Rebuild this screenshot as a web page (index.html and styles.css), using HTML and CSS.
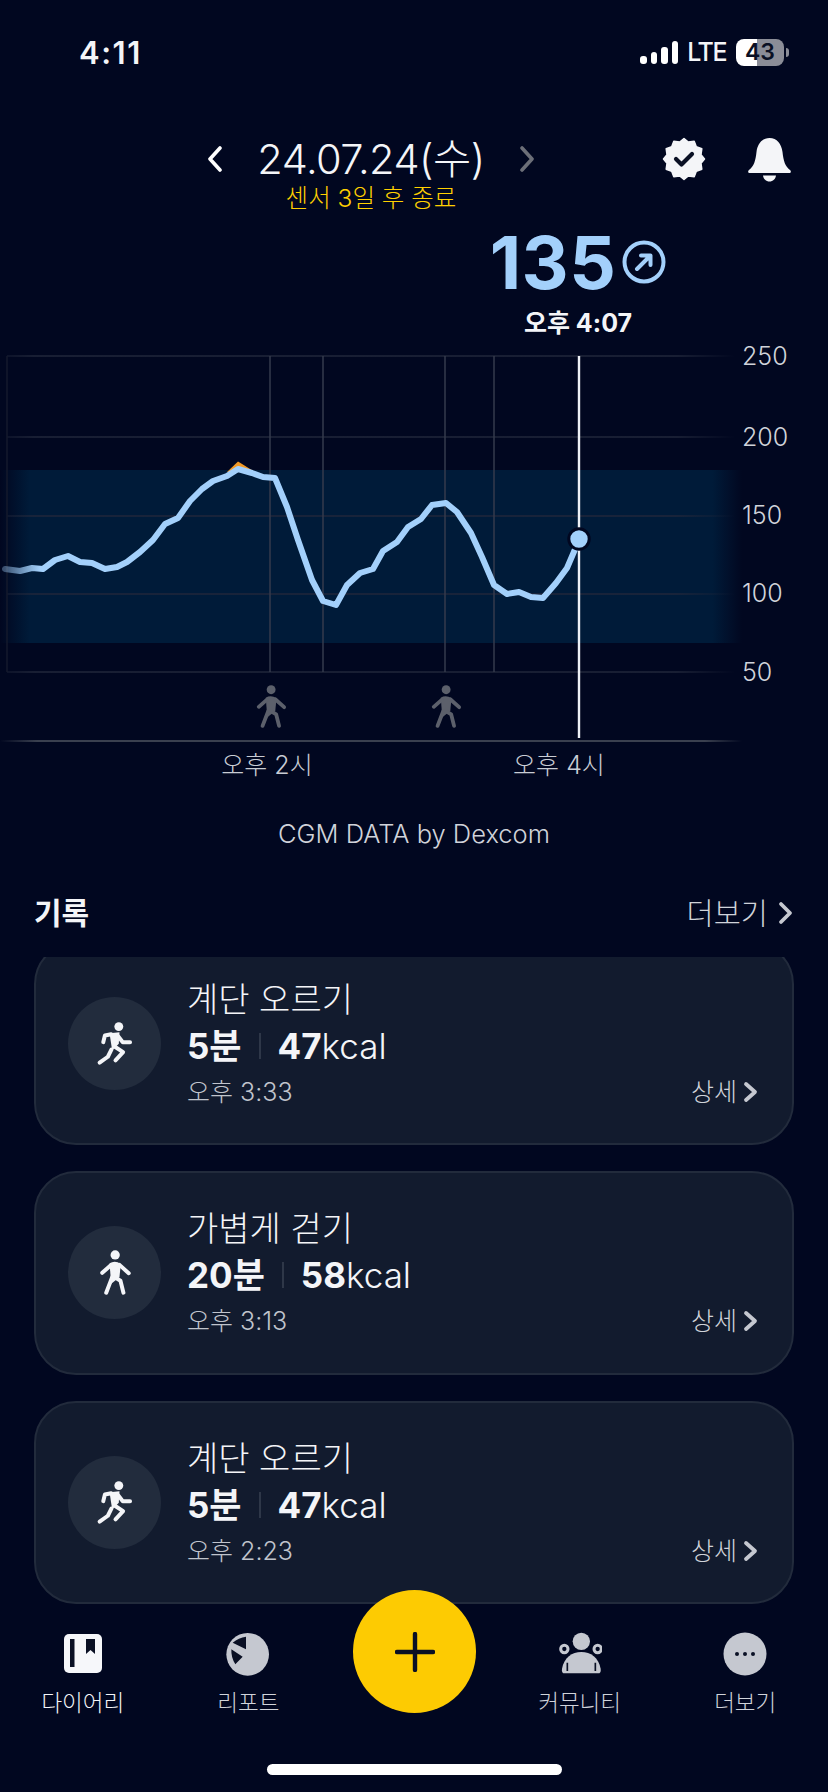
FILE: index.html
```html
<!DOCTYPE html>
<html lang="ko">
	<head>
		<meta charset="utf-8">
		<title>기록</title>
		<link rel="stylesheet" href="styles.css">
	</head>
	<body>
		<div id="screen">
			<!-- status bar -->
			<div class="status">
				<span class="clock">4:11</span>
				<div class="signal"><i></i><i></i><i></i><i></i></div>
				<span class="lte">LTE</span>
				<div class="battery">43</div>
				<div class="batteryTip"></div>
			</div>

			<!-- date header -->
			<div class="dateBar">
				<svg class="chev" width="15" height="26" viewBox="0 0 15 26"><path d="M13 2 L3 13 L13 24" fill="none" stroke="#fff" stroke-width="3.6" stroke-linecap="round" stroke-linejoin="round"/></svg>
				<div class="dateBlock">
					<div class="date">24.07.24(수)</div>
					<div class="sensor">센서 3일 후 종료</div>
				</div>
				<svg class="chev" width="15" height="26" viewBox="0 0 15 26"><path d="M2 2 L12 13 L2 24" fill="none" stroke="#6c6f78" stroke-width="3.6" stroke-linecap="round" stroke-linejoin="round"/></svg>
				<svg class="badge" width="44" height="44" viewBox="-22 -22 44 44">
					<polygon fill="#f4f5f8" stroke="#f4f5f8" stroke-width="1.5" stroke-linejoin="round" points="0,-20.500 4.300,-17 10.200,-17.800 12.300,-12.300 17.800,-10.200 17,-4.300 20.500,0 17,4.300 17.800,10.200 12.300,12.300 10.200,17.800 4.300,17 0,20.500 -4.300,17 -10.200,17.800 -12.300,12.300 -17.800,10.200 -17,4.300 -20.500,0 -17,-4.300 -17.800,-10.200 -12.300,-12.300 -10.200,-17.800 -4.300,-17"/>
					<path d="M-8 0 L-2.500 5.500 L8 -5" fill="none" stroke="#0a1024" stroke-width="4.200" stroke-linecap="round" stroke-linejoin="round"/>
				</svg>
				<svg class="bell" width="43" height="44" viewBox="0 0 43 44">
					<path fill="#f4f5f8" d="M21.500 0 C29 0 33.500 6 34.500 14 C35.500 23 37 28 42 32 C43.500 33.500 43 35 41 35 L2 35 C0 35 -0.500 33.500 1 32 C6 28 7.500 23 8.500 14 C9.500 6 14 0 21.500 0 Z M15 37.500 L28 37.500 C27.500 41 25 43.500 21.500 43.500 C18 43.500 15.500 41 15 37.500 Z"/>
				</svg>
			</div>

			<!-- current reading -->
			<div class="reading">
				<div class="valueRow">
					<span class="value">135</span>
					<svg width="44" height="44" viewBox="0 0 44 44">
						<circle cx="22" cy="22" r="19.500" fill="none" stroke="#a3d0fb" stroke-width="4"/>
						<path d="M15 29 L28 16 M19 15.500 L28.500 15.500 L28.500 25" fill="none" stroke="#a3d0fb" stroke-width="4" stroke-linecap="round" stroke-linejoin="round"/>
					</svg>
				</div>
				<div class="readingTime">오후 4:07</div>
			</div>

			<!-- chart: viewBox keeps the page coordinates -->
			<svg class="chart" width="828" height="460" viewBox="0 340 828 460">
				<defs>
					<linearGradient id="band" x1="0" x2="1" y1="0" y2="0">
						<stop offset="0" stop-color="#001b39" stop-opacity="0"/>
						<stop offset="0.04" stop-color="#001b39"/>
						<stop offset="0.96" stop-color="#001b39"/>
						<stop offset="1" stop-color="#001b39" stop-opacity="0"/>
					</linearGradient>
					<linearGradient id="base" x1="0" x2="1" y1="0" y2="0">
						<stop offset="0" stop-color="#3a404f" stop-opacity="0"/>
						<stop offset="0.05" stop-color="#3a404f"/>
						<stop offset="0.95" stop-color="#3a404f"/>
						<stop offset="1" stop-color="#3a404f" stop-opacity="0"/>
					</linearGradient>
					<linearGradient id="gridFade" gradientUnits="userSpaceOnUse" x1="5" x2="735" y1="0" y2="0">
						<stop offset="0" stop-color="#20263a" stop-opacity="0.5"/>
						<stop offset="0.04" stop-color="#20263a"/>
						<stop offset="0.92" stop-color="#20263a"/>
						<stop offset="1" stop-color="#20263a" stop-opacity="0"/>
					</linearGradient>
					<linearGradient id="curve" gradientUnits="userSpaceOnUse" x1="4" x2="40" y1="0" y2="0">
						<stop offset="0" stop-color="#a3d0fb" stop-opacity="0.35"/>
						<stop offset="1" stop-color="#a3d0fb"/>
					</linearGradient>
					<symbol id="walk" viewBox="110 120 110 145">
						<circle cx="167" cy="138" r="14"/>
						<path d="M150 163 Q167 153 184 165 L180 205 L155 225 Z"/>
						<path class="limb" d="M153 170 L128 192 M180 168 L208 193 M158 205 L140 252 M165 205 L183 216 L192 252"/>
					</symbol>
					<symbol id="run" viewBox="110 120 110 145">
						<circle cx="178" cy="143" r="13.500"/>
						<path d="M150 163 L180 160 L178 195 L158 215 Z"/>
						<path class="limb" d="M155 166 L136 170 L131 190 M176 172 L190 190 L212 190 M156 212 L145 234 L120 252 M165 203 L191 220 L168 245"/>
					</symbol>
				</defs>
				<rect x="0" y="470" width="742" height="173" fill="url(#band)"/>
				<g class="grid" stroke="url(#gridFade)">
					<line x1="7" x2="735" y1="356" y2="356"/>
					<line x1="7" x2="735" y1="437" y2="437"/>
					<line x1="7" x2="735" y1="516" y2="516"/>
					<line x1="7" x2="735" y1="594" y2="594"/>
					<line x1="7" x2="735" y1="672" y2="672"/>
				</g>
				<line class="leftEdge" x1="7" x2="7" y1="356" y2="672"/>
				<g class="vgrid">
					<line x1="270" x2="270" y1="356" y2="672"/>
					<line x1="323" x2="323" y1="356" y2="672"/>
					<line x1="445" x2="445" y1="356" y2="672"/>
					<line x1="494" x2="494" y1="356" y2="672"/>
				</g>
				<rect x="0" y="740" width="742" height="2" fill="url(#base)"/>
				<line x1="579" x2="579" y1="356" y2="738" stroke="#eef1f6" stroke-width="2.400"/>
				<polygon points="227,472 238,461.500 255,472" fill="#f39a25"/>
				<polyline class="curve" stroke="url(#curve)" points="5,569 20,571 32,568 43,569 55,560 68,556 80,562 92,563 105,569 117,567 127,562 140,552 153,540 165,524 178,518 190,501 202,489 213,481 227,476 238,469 252,473 263,477 275,478 287,507 298,540 312,580 323,601 336,605 347,585 360,573 373,569 383,551 397,542 408,527 421,519 432,505 446,503 457,512 471,533 482,557 494,585 507,594 519,592 531,597 543,598 556,583 567,568 579,540"/>
				<circle cx="579" cy="539" r="10.200" fill="#a3d0fb" stroke="#010720" stroke-width="3"/>
				<svg x="253" y="684" width="35" height="46" class="walker" viewBox="0 0 110 145"><use href="#walk"/></svg>
				<svg x="428" y="684" width="35" height="46" class="walker" viewBox="0 0 110 145"><use href="#walk"/></svg>
				<g class="axis">
					<text x="742" y="365">250</text>
					<text x="742" y="446">200</text>
					<text x="742" y="524">150</text>
					<text x="742" y="602">100</text>
					<text x="742" y="681">50</text>
				</g>
				<text class="hour" x="267" y="774">오후 2시</text>
				<text class="hour" x="559" y="774">오후 4시</text>
			</svg>

			<div class="source">CGM DATA by Dexcom</div>

			<div class="sectionHead">
				<span class="sectionTitle">기록</span>
				<span class="more">더보기
					<svg width="15" height="24" viewBox="0 0 15 24"><path d="M3 3 L12 12 L3 21" fill="none" stroke="#c5c8d0" stroke-width="3.800" stroke-linecap="round" stroke-linejoin="round"/></svg>
				</span>
			</div>

			<!-- records, the first card is scrolled under the header -->
			<div class="records">
				<div class="card">
					<div class="cardIcon"><svg width="37" height="48" viewBox="0 0 110 145"><use href="#run"/></svg></div>
					<div class="cardBody">
						<div class="cardTitle">계단 오르기</div>
						<div class="cardStats"><b>5분</b><i></i><span><b>47</b>kcal</span></div>
						<div class="cardFoot">
							<span>오후 3:33</span>
							<span class="detail">상세<svg width="15" height="22" viewBox="0 0 15 22"><path d="M3 3 L12 11 L3 19" fill="none" stroke="#c5c8d0" stroke-width="3.800" stroke-linecap="round" stroke-linejoin="round"/></svg></span>
						</div>
					</div>
				</div>
				<div class="card">
					<div class="cardIcon"><svg width="37" height="48" viewBox="0 0 110 145"><use href="#walk"/></svg></div>
					<div class="cardBody">
						<div class="cardTitle">가볍게 걷기</div>
						<div class="cardStats"><b>20분</b><i></i><span><b>58</b>kcal</span></div>
						<div class="cardFoot">
							<span>오후 3:13</span>
							<span class="detail">상세<svg width="15" height="22" viewBox="0 0 15 22"><path d="M3 3 L12 11 L3 19" fill="none" stroke="#c5c8d0" stroke-width="3.800" stroke-linecap="round" stroke-linejoin="round"/></svg></span>
						</div>
					</div>
				</div>
				<div class="card">
					<div class="cardIcon"><svg width="37" height="48" viewBox="0 0 110 145"><use href="#run"/></svg></div>
					<div class="cardBody">
						<div class="cardTitle">계단 오르기</div>
						<div class="cardStats"><b>5분</b><i></i><span><b>47</b>kcal</span></div>
						<div class="cardFoot">
							<span>오후 2:23</span>
							<span class="detail">상세<svg width="15" height="22" viewBox="0 0 15 22"><path d="M3 3 L12 11 L3 19" fill="none" stroke="#c5c8d0" stroke-width="3.800" stroke-linecap="round" stroke-linejoin="round"/></svg></span>
						</div>
					</div>
				</div>
			</div>

			<!-- tab bar -->
			<div class="tabs">
				<div class="tab tabOn">
					<svg width="44" height="44" viewBox="0 0 44 44">
						<rect x="3" y="2" width="38" height="39" rx="5" fill="#f6f7fa"/>
						<rect x="9" y="7" width="4.500" height="28" fill="#0a1024"/>
						<path d="M25 7 H34 V22 L29.500 18 L25 22 Z" fill="#0a1024"/>
					</svg>
					<span>다이어리</span>
				</div>
				<div class="tab">
					<svg width="44" height="44" viewBox="590 98 132 132">
						<circle cx="655" cy="165" r="64" fill="#c5c8d0"/>
						<path d="M610 130 Q628 115 650 112 L650 150 Z M606 150 L640 172 L618 195 Q605 175 606 150 Z" fill="#0a1024"/>
					</svg>
					<span>리포트</span>
				</div>
				<div class="tab">
					<div class="addBtn">
						<svg width="40" height="40" viewBox="0 0 40 40"><path d="M20 2 V38 M2 20 H38" stroke="#0a1024" stroke-width="4.400" stroke-linecap="round"/></svg>
					</div>
				</div>
				<div class="tab">
					<svg width="44" height="44" viewBox="108 98 132 132">
						<circle cx="178" cy="126" r="26" fill="#c5c8d0"/>
						<circle cx="127" cy="149" r="11" fill="none" stroke="#c5c8d0" stroke-width="9"/>
						<circle cx="227" cy="149" r="11" fill="none" stroke="#c5c8d0" stroke-width="9"/>
						<path d="M128 222 Q118 222 120 208 C126 175 150 158 178 158 C206 158 230 175 236 208 Q238 222 228 222 Z" fill="#c5c8d0"/>
						<path d="M136 215 L136 190 M220 215 L220 190" stroke="#0a1024" stroke-width="5"/>
					</svg>
					<span>커뮤니티</span>
				</div>
				<div class="tab">
					<svg width="44" height="44" viewBox="0 0 44 44">
						<circle cx="22" cy="22" r="21.500" fill="#c5c8d0"/>
						<circle cx="14" cy="22" r="2" fill="#0a1024"/>
						<circle cx="22" cy="22" r="2" fill="#0a1024"/>
						<circle cx="30" cy="22" r="2" fill="#0a1024"/>
					</svg>
					<span>더보기</span>
				</div>
			</div>
			<div class="homeBar"></div>
		</div>
	</body>
</html>
```

FILE: styles.css
```css
html, body {
	margin: 0;
	padding: 0;
	background-color: #010720;
}
body {
	font-family: Inter, "Noto Sans CJK KR", sans-serif;
	color: #f4f5f8;
}
#screen {
	width: 828px;
	height: 1792px;
	overflow: hidden;
}

/* status bar */
.status {
	height: 104px;
	display: flex;
	align-items: center;
	padding-left: 79px;
	box-sizing: border-box;
}
.clock {
	font-size: 31px;
	font-weight: 600;
	letter-spacing: 1.500px;
	margin-right: auto;
}
.signal {
	display: flex;
	align-items: flex-end;
	gap: 4px;
	height: 23px;
	margin-right: 9px;
}
.signal i {
	width: 6.500px;
	border-radius: 3px;
	background-color: #fff;
}
.signal i:nth-child(1) { height: 8px; }
.signal i:nth-child(2) { height: 12px; }
.signal i:nth-child(3) { height: 17px; }
.signal i:nth-child(4) { height: 23px; }
.lte {
	font-size: 25px;
	font-weight: 500;
	letter-spacing: -1.500px;
	margin-right: 10px;
}
.battery {
	width: 48px;
	height: 27px;
	border-radius: 8px;
	background: linear-gradient(90deg, #fff 44%, #8b8d97 44%);
	color: #0a1024;
	font-size: 23px;
	font-weight: 600;
	line-height: 27px;
	text-align: center;
}
.batteryTip {
	width: 3px;
	height: 9px;
	margin-left: 2px;
	margin-right: 39px;
	border-radius: 0 3px 3px 0;
	background-color: #8b8d97;
}

/* date header */
.dateBar {
	height: 112px;
	display: flex;
	align-items: flex-start;
	padding-left: 207px;
}
.chev {
	margin-top: 42px;
	flex: none;
}
.dateBlock {
	width: 298px;
	text-align: center;
	padding-top: 31px;
}
.date {
	font-size: 41.500px;
	font-weight: 300;
	line-height: 48px;
	letter-spacing: -0.500px;
}
.sensor {
	font-size: 24.500px;
	font-weight: 300;
	line-height: 31px;
	color: #ffd000;
}
.badge {
	margin-left: 127px;
	margin-top: 33px;
}
.bell {
	margin-left: 42px;
	margin-top: 34px;
}

/* reading */
.reading {
	height: 124px;
	width: 176px;
	margin-left: 490px;
	display: flex;
	flex-direction: column;
	align-items: center;
}
.valueRow {
	display: flex;
	align-items: center;
	gap: 6px;
	height: 92px;
}
.value {
	font-size: 73px;
	font-weight: 700;
	letter-spacing: 0.500px;
	color: #a3d0fb;
}
.readingTime {
	font-size: 25px;
	font-weight: 700;
	line-height: 30px;
	white-space: nowrap;
}

/* chart */
.chart {
	display: block;
}
.grid line {
	stroke-width: 1.500;
}
.leftEdge {
	stroke: #141a2c;
	stroke-width: 1.500;
}
.vgrid line {
	stroke: #353b4c;
	stroke-width: 1.500;
}
.curve {
	fill: none;
	stroke-width: 6;
	stroke-linejoin: round;
	stroke-linecap: round;
}
.axis text {
	font-size: 25px;
	font-weight: 300;
	fill: #d0d3da;
}
.hour {
	font-size: 25px;
	font-weight: 300;
	fill: #c8ccd4;
	text-anchor: middle;
}
.walker {
	fill: #5c606b;
	color: #5c606b;
}
.limb {
	fill: none;
	stroke: currentColor;
	stroke-width: 12;
	stroke-linecap: round;
	stroke-linejoin: round;
}

.source {
	height: 70px;
	line-height: 68px;
	text-align: center;
	font-size: 25.500px;
	font-weight: 300;
	color: #d0d3da;
}

/* section heading */
.sectionHead {
	height: 87px;
	box-sizing: border-box;
	padding: 26px 35px 0 34px;
	display: flex;
	justify-content: space-between;
	align-items: flex-start;
}
.sectionTitle {
	font-size: 30px;
	font-weight: 700;
	line-height: 34px;
}
.more {
	display: flex;
	align-items: center;
	gap: 10px;
	font-size: 29.500px;
	font-weight: 300;
	line-height: 34px;
	color: #d0d3da;
}

/* record cards */
.records {
	height: 648px;
	overflow: hidden;
	display: flex;
	flex-direction: column;
	gap: 26px;
	padding: 0 34px 0 34px;
}
.card {
	flex: none;
	height: 203.500px;
	box-sizing: border-box;
	display: flex;
	align-items: center;
	padding: 0 32px;
	background-color: #121b2e;
	border: 2px solid #222b3c;
	border-radius: 42px;
	color: #f4f5f8;
}
.card:first-child {
	margin-top: -15.500px;
}
.cardIcon {
	width: 93px;
	height: 93px;
	flex: none;
	border-radius: 50%;
	background-color: #222c3d;
	display: flex;
	align-items: center;
	justify-content: center;
	fill: #f4f5f8;
	color: #f4f5f8;
}
.cardBody {
	flex: 1;
	margin-left: 26px;
	margin-right: 2px;
	padding-top: 2px;
}
.cardTitle {
	font-size: 34px;
	font-weight: 300;
	line-height: 42px;
}
.cardStats {
	display: flex;
	align-items: center;
	font-size: 35px;
	font-weight: 300;
	line-height: 44px;
	margin-top: 3px;
}
.cardStats b {
	font-weight: 700;
}
.cardStats i {
	width: 2px;
	height: 26px;
	margin: 0 17px;
	background-color: #2e3748;
}
.cardFoot {
	display: flex;
	justify-content: space-between;
	align-items: center;
	font-size: 25px;
	font-weight: 300;
	line-height: 36px;
	margin-top: 6px;
	color: #c0c4cc;
}
.detail {
	display: flex;
	align-items: center;
	gap: 6px;
	color: #d0d3da;
}

/* tab bar */
.tabs {
	display: grid;
	grid-template-columns: repeat(5, 1fr);
	height: 155px;
	padding-top: 27px;
	box-sizing: border-box;
}
.tab {
	position: relative;
	display: flex;
	flex-direction: column;
	align-items: center;
	gap: 12px;
	font-size: 22.500px;
	font-weight: 300;
	line-height: 30px;
	color: #d0d3da;
}
.tabOn {
	color: #f4f5f8;
}
.addBtn {
	position: absolute;
	top: -42px;
	left: 22px;
	width: 123px;
	height: 123px;
	border-radius: 50%;
	background-color: #fdcb02;
	display: flex;
	align-items: center;
	justify-content: center;
}
.homeBar {
	width: 295px;
	height: 11px;
	margin: 4px 0 0 267px;
	border-radius: 6px;
	background-color: #fff;
}
```
